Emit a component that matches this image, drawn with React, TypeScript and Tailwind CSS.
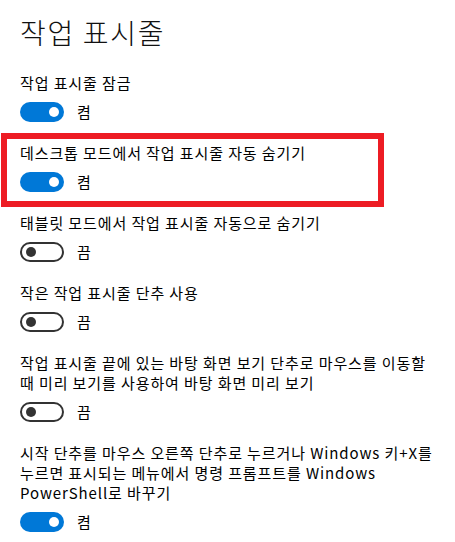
import React from "react"

type Setting = {
  label: React.ReactNode
  on: boolean
}

function Toggle({ on }: { on: boolean }) {
  if (on) {
    return (
      <div className="flex h-[20px] w-[44px] items-center justify-end rounded-full bg-[#0078d7] pr-[5px]">
        <div className="h-[10px] w-[10px] rounded-full bg-white" />
      </div>
    )
  }
  return (
    <div className="flex h-[20px] w-[44px] items-center justify-start rounded-full border-2 border-[#333333] bg-white pl-[4px]">
      <div className="h-[10px] w-[10px] rounded-full bg-[#333333]" />
    </div>
  )
}

function SettingRow({ label, on }: Setting) {
  return (
    <div>
      <p className="text-[15px] leading-[20px] tracking-[0.9px] text-black whitespace-nowrap">{label}</p>
      <div className="mt-[9px] flex items-center gap-[13px]">
        <Toggle on={on} />
        <span className="text-[15px] leading-[20px] text-black">{on ? "켬" : "끔"}</span>
      </div>
    </div>
  )
}

export default function App() {
  return (
    <main
      className="min-h-screen w-[455px] bg-white px-[20px] pt-[14px]"
      style={{ fontFamily: '"Noto Sans CJK KR", "Noto Sans", sans-serif' }}
    >
      <h1 className="text-[28px] font-light leading-[36px] tracking-[1.7px] text-[#111111]">작업 표시줄</h1>

      <div className="mt-[23px]">
        <SettingRow label="작업 표시줄 잠금" on />
      </div>

      {/* highlighted option */}
      <div className="mt-[11px] ml-[-19px] w-[383px] border-[6px] border-[#ed1c24] pl-[13px] pt-[4px] pb-[9px]">
        <SettingRow label="데스크톱 모드에서 작업 표시줄 자동 숨기기" on />
      </div>

      <div className="mt-[6px] flex flex-col gap-[21px]">
        <SettingRow label="태블릿 모드에서 작업 표시줄 자동으로 숨기기" on={false} />
        <SettingRow label="작은 작업 표시줄 단추 사용" on={false} />
        <SettingRow
          label={
            <>
              작업 표시줄 끝에 있는 바탕 화면 보기 단추로 마우스를 이동할
              <br />
              때 미리 보기를 사용하여 바탕 화면 미리 보기
            </>
          }
          on={false}
        />
        <SettingRow
          label={
            <>
              시작 단추를 마우스 오른쪽 단추로 누르거나 Windows 키+X를
              <br />
              누르면 표시되는 메뉴에서 명령 프롬프트를 Windows
              <br />
              PowerShell로 바꾸기
            </>
          }
          on
        />
      </div>
    </main>
  )
}
